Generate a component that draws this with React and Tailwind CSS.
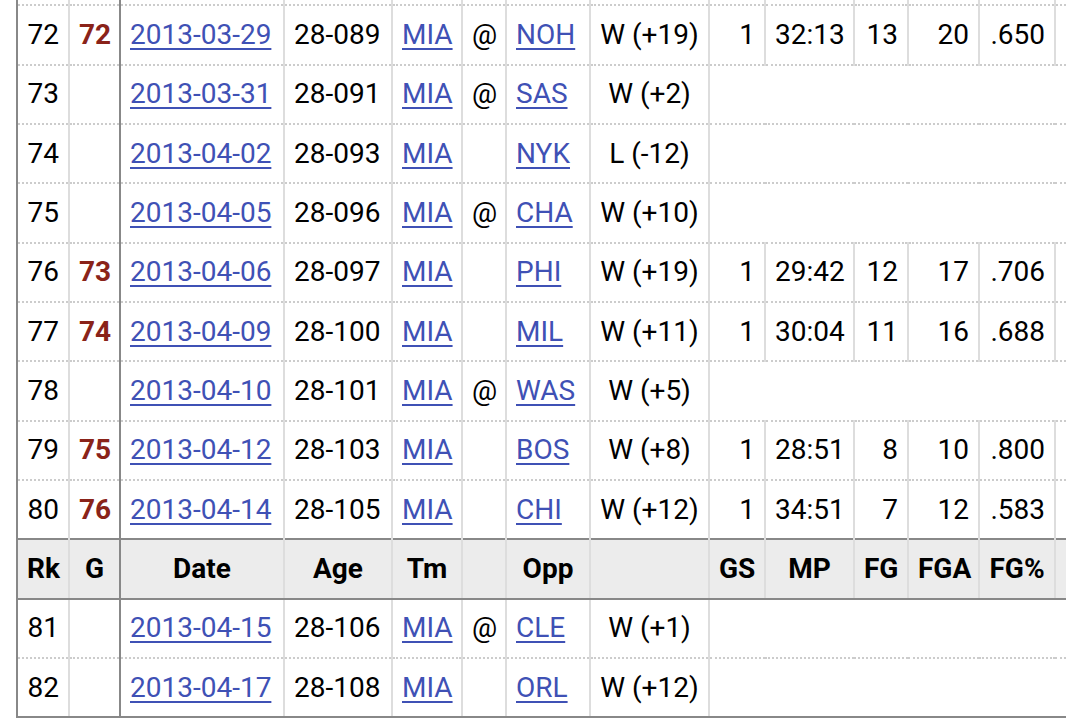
import React from 'react';

// column setup: width, text alignment for body cells, extra border classes
const COLS = [
  { w: 'w-[52px]', al: 'text-right', b: 'border-l-[#888]' },
  { w: 'w-[51px]', al: 'text-right', b: 'border-r-[#888]' },
  { w: 'w-[164px]', al: 'text-left', b: 'border-x-[#888]' },
  { w: 'w-[108px]', al: 'text-left', b: 'border-l-[#888]' },
  { w: 'w-[70px]', al: 'text-left', b: '' },
  { w: 'w-[44px]', al: 'text-center', b: '' },
  { w: 'w-[84px]', al: 'text-left', b: '' },
  { w: 'w-[119px]', al: 'text-center', b: '' },
  { w: 'w-[56px]', al: 'text-right', b: '' },
  { w: 'w-[89px]', al: 'text-right', b: '' },
  { w: 'w-[54px]', al: 'text-right', b: '' },
  { w: 'w-[71px]', al: 'text-right', b: '' },
  { w: 'w-[76px]', al: 'text-right', b: '' },
  { w: 'w-[60px]', al: 'text-right', b: '' },
];

const HEAD = ['Rk', 'G', 'Date', 'Age', 'Tm', '', 'Opp', '', 'GS', 'MP', 'FG', 'FGA', 'FG%', '3P'];

// last column (3P) scrolls off to the right, so its values stay blank
const games = [
  ['72', '72', '2013-03-29', '28-089', 'MIA', '@', 'NOH', 'W (+19)', '1', '32:13', '13', '20', '.650', ''],
  ['73', '', '2013-03-31', '28-091', 'MIA', '@', 'SAS', 'W (+2)'],
  ['74', '', '2013-04-02', '28-093', 'MIA', '', 'NYK', 'L (-12)'],
  ['75', '', '2013-04-05', '28-096', 'MIA', '@', 'CHA', 'W (+10)'],
  ['76', '73', '2013-04-06', '28-097', 'MIA', '', 'PHI', 'W (+19)', '1', '29:42', '12', '17', '.706', ''],
  ['77', '74', '2013-04-09', '28-100', 'MIA', '', 'MIL', 'W (+11)', '1', '30:04', '11', '16', '.688', ''],
  ['78', '', '2013-04-10', '28-101', 'MIA', '@', 'WAS', 'W (+5)'],
  ['79', '75', '2013-04-12', '28-103', 'MIA', '', 'BOS', 'W (+8)', '1', '28:51', '8', '10', '.800', ''],
  ['80', '76', '2013-04-14', '28-105', 'MIA', '', 'CHI', 'W (+12)', '1', '34:51', '7', '12', '.583', ''],
];

const after = [
  ['81', '', '2013-04-15', '28-106', 'MIA', '@', 'CLE', 'W (+1)'],
  ['82', '', '2013-04-17', '28-108', 'MIA', '', 'ORL', 'W (+12)'],
];

const cellBase = 'h-[59.33px] px-[9px] py-0 leading-none whitespace-nowrap border-x-2 border-x-[#ddd] border-b-2';
const dotted = 'border-b-[#ccc] [border-bottom-style:dotted]';
const solid = 'border-b-[#888] [border-bottom-style:solid]';

const linkCls = 'text-[#3f51b5] underline underline-offset-[4px] decoration-[1.5px]';

function GameRow({ row, last }) {
  const played = row.length > 8;
  const edge = last ? solid : dotted;
  const cells = played ? row : row.slice(0, 8);
  return (
    <tr>
      {cells.map((v, i) => {
        let content = v;
        if (i === 1 && v) content = <span className="font-bold text-[#8a2319]">{v}</span>;
        if ((i === 2 || i === 4 || i === 6) && v) content = <a className={linkCls}>{v}</a>;
        return (
          <td key={i} className={`${cellBase} ${edge} ${COLS[i].al} ${COLS[i].b}`}>
            {content}
          </td>
        );
      })}
      {!played && <td colSpan={6} className={`${cellBase} ${edge}`}></td>}
    </tr>
  );
}

// tail of the row scrolled above the top edge: only its borders show
function TailRow() {
  return (
    <tr>
      {COLS.map((c, i) => (
        <td key={i} className={`${cellBase} ${dotted} ${c.b}`}></td>
      ))}
    </tr>
  );
}

function HeaderRow() {
  return (
    <tr className="bg-[#ececec]">
      {HEAD.map((h, i) => (
        <th
          key={i}
          className={`h-[59.33px] px-[9px] py-0 leading-none whitespace-nowrap font-bold text-center border-x-2 border-x-[#ddd] border-y-2 border-y-[#888] ${COLS[i].b}`}
        >
          {h}
        </th>
      ))}
    </tr>
  );
}

export default function App() {
  return (
    <div className="w-[1079px] h-[724px] bg-white overflow-hidden">
      <div className="ml-4 w-[1050px] h-[724px] overflow-hidden">
        <table className="table-fixed border-collapse w-[1098px] mt-[-54px] font-[Roboto,sans-serif] text-[28px] text-black">
          <colgroup>
            {COLS.map((c, i) => (
              <col key={i} className={c.w} />
            ))}
          </colgroup>
          <tbody>
            <TailRow />
            {games.map((r) => (
              <GameRow key={r[0]} row={r} />
            ))}
            <HeaderRow />
            {after.map((r, i) => (
              <GameRow key={r[0]} row={r} last={i === after.length - 1} />
            ))}
          </tbody>
        </table>
      </div>
    </div>
  );
}
